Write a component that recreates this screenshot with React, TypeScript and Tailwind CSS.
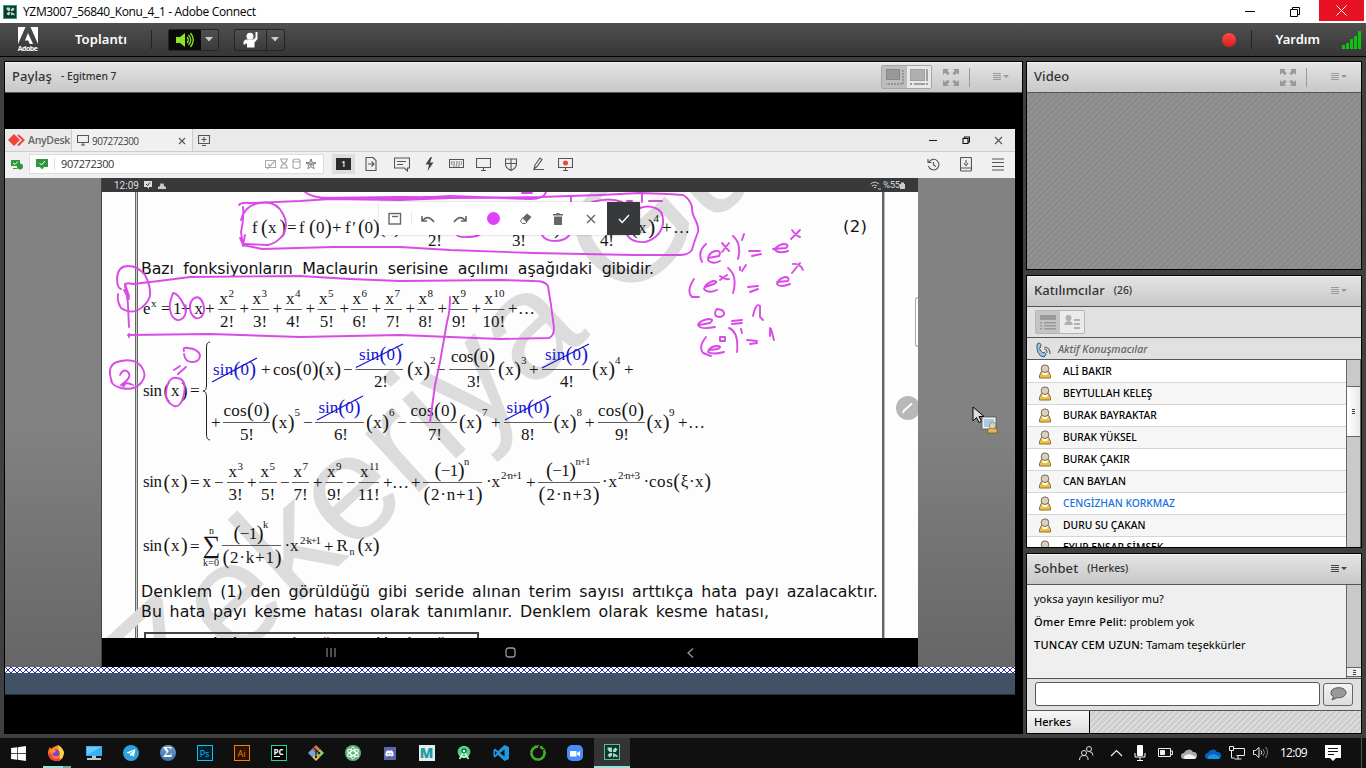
import React from "react";
import { FaWindows, FaTelegramPlane, FaDiscord } from "react-icons/fa";

type Tok = [string, number, number, number, number?, string?];

const BLUE = "#1414d2";

const X = (n: string, x: number, y: number, s = 16.5, w?: number, c?: string): Tok => [n, x, y, s, w, c];

const tokens: Tok[] = [
  // Maclaurin expansion
  X("f", 252, 233), X("(", 261, 234, 20), X("x", 268, 233, 17), X(")", 279.5, 234, 20), X("=", 287, 233, 17),
  X("f", 299, 233), X("(", 309, 234, 20), X("0", 316, 233, 17), X(")", 325, 234, 20), X("+", 332, 233, 17),
  X("f′", 345, 233, 17, 11), X("(", 358, 234, 20), X("0", 364.5, 233, 17), X(")", 373, 234, 20),
  X("(", 379, 233, 20), X(")", 394, 233, 20),
  X("2!", 428, 246, 17, 14), X("3!", 512, 246, 17, 14), X("4!", 600, 246, 17, 14),
  X(")", 554, 234, 20), X("(", 631, 234, 20), X("x", 638, 233, 17), X(")", 648, 234, 22), X("4", 653.5, 222, 11),
  X("+…", 662, 233, 17, 28),
  // exponential series
  X("e", 143, 313.5, 17), X("x", 151, 307, 11), X("=", 161, 314, 17), X("1", 173, 313.5, 17), X("+", 181, 314, 17), X("x", 194.5, 313.5, 17), X("+", 205, 314, 17),
  // piecewise body
  X("sin", 143, 395.5, 17, 19), X("(", 163.5, 397, 20), X("x", 171, 395.5, 17), X(")", 181, 397, 20), X("=", 190, 396, 17),
  X("sin(0)", 213, 374.5, 17, 43, BLUE), X("+", 261, 375, 17), X("cos(0)(x)", 273, 374.5, 17, 68), X("−", 343, 375, 17),
  X("sin(0)", 359, 360, 17, 43, BLUE), X("2!", 374, 386.5, 17, 14), X("(x)", 407, 374.5, 17, 23), X("2", 430, 363.5, 11), X("−", 436, 375, 17),
  X("cos(0)", 451, 362, 17, 44), X("3!", 467, 386.5, 17, 14), X("(x)", 498, 374.5, 17, 23), X("3", 521, 363.5, 11), X("+", 529, 375, 17),
  X("sin(0)", 545, 360, 17, 43, BLUE), X("4!", 560, 386.5, 17, 14), X("(x)", 592, 374.5, 17, 23), X("4", 615, 363.5, 11), X("+", 624, 375, 17),
  X("+", 211, 428, 17), X("cos(0)", 223.5, 415.5, 17, 46), X("5!", 240, 440, 17, 14), X("(x)", 271.5, 427.5, 17, 23), X("5", 294.5, 416, 11), X("−", 303, 428, 17),
  X("sin(0)", 318.5, 413, 17, 42, BLUE), X("6!", 334, 440, 17, 14), X("(x)", 366, 427.5, 17, 23), X("6", 389, 416, 11), X("−", 397, 428, 17),
  X("cos(0)", 410.5, 415.5, 17, 46), X("7!", 428, 440, 17, 14), X("(x)", 459, 427.5, 17, 23), X("7", 482, 416, 11), X("+", 491, 428, 17),
  X("sin(0)", 506.5, 413, 17, 43, BLUE), X("8!", 521, 440, 17, 14), X("(x)", 553.5, 427.5, 17, 23), X("8", 576.5, 416, 11), X("+", 585, 428, 17),
  X("cos(0)", 598, 415.5, 17, 46), X("9!", 615, 440, 17, 14), X("(x)", 646.5, 427.5, 17, 23), X("9", 669, 416, 11), X("+…", 678, 428, 17, 27),
  // sine series
  X("sin", 143, 487, 17, 19), X("(", 163.5, 488.5, 20), X("x", 171, 487, 17), X(")", 181, 488.5, 20), X("=", 190, 488, 17), X("x", 202.5, 487, 17), X("−", 214, 488, 17),
  X("+", 247, 488, 17), X("−", 280, 488, 17), X("+", 313, 488, 17), X("−", 346, 488, 17), X("+…", 383, 488, 17, 26), X("+", 411, 488, 17),
  X("(−1)", 434.5, 476, 17, 30), X("n", 464, 465, 10.5), X("(2·n+1)", 423.5, 500, 17, 59), X("·", 486, 487, 17), X("x", 491.5, 487, 17), X("2·n+1", 501, 479, 11, 21), X("+", 526, 488, 17),
  X("(−1)", 546, 476, 17, 30), X("n+1", 575.5, 465, 10.5, 15), X("(2·n+3)", 538.5, 500, 17, 61), X("·", 602, 487, 17), X("x", 608.5, 487, 17), X("2·n+3", 618, 479, 11, 22), X("·", 643.5, 487, 17), X("cos(ξ·x)", 649, 487, 17, 62),
  // sum form
  X("sin", 143, 550.5, 17, 19), X("(", 163.5, 552, 20), X("x", 171, 550.5, 17), X(")", 181, 552, 20), X("=", 190, 551.5, 17), X("∑", 202.5, 553, 25, 18), X("n", 209, 534, 10), X("k=0", 203, 565.5, 10, 16),
  X("(−1)", 233.5, 538.5, 17, 30), X("k", 263, 528, 10.5), X("(2·k+1)", 222.5, 563, 17, 59), X("·", 284.5, 550.5, 17), X("x", 290, 550.5, 17), X("2·k+1", 300, 543.5, 11, 21), X("+", 324, 551.5, 17), X("R", 336.5, 550.5, 17), X("n", 349.5, 555, 10), X("(x)", 357.5, 551, 17, 22),
];

const expTerms: [number, number, string][] = [
  [218, 236, "2"], [251, 269, "3"], [284.5, 302, "4"], [317.5, 336, "5"], [351, 368, "6"], [384, 402, "7"], [417, 434, "8"], [450, 468, "9"], [483, 504.5, "10"],
];
const sinTerms: [number, number, string][] = [
  [227, 244, "3"], [259, 277, "5"], [292, 309, "7"], [325.5, 343, "9"], [358.5, 379, "11"],
];
const bars: [number, number, number][] = [
  [355.5, 403, 369.5], [449, 495, 369.5], [542, 590, 369.5], [223, 270, 422.5], [315, 364, 422.5], [410, 457, 422.5], [504, 552, 422.5], [598, 645, 422.5],
  [423, 482, 482.5], [538, 600, 482.5], [222, 281, 545.5],
];
const strikes = ["M212 382L257 358", "M356 367.5L403 344", "M542 368L589 344", "M317 420L363 396", "M505 420L551 396"];

// Brackets inside an expression are set taller and slightly lower than its letters.
function MathText({ tok: [t, x, y, s, w, c] }: { tok: Tok }) {
  const parts = t.length > 1 ? t.split(/([()])/).filter(Boolean) : [t];
  const tall = (p?: string) => t.length > 1 && (p === "(" || p === ")");
  return (
    <text x={x} y={y} fontSize={s} fill={c} textLength={w} lengthAdjust="spacing">
      {parts.map((p, i) => (
        <tspan key={i} fontSize={tall(p) ? s + 3.5 : s} dy={(tall(p) ? 1.2 : 0) - (tall(parts[i - 1]) ? 1.2 : 0)}>{p}</tspan>
      ))}
    </text>
  );
}

function Terms({ list, y }: { list: [number, number, string][]; y: number }) {
  return (
    <>
      {list.map(([a, b, n]) => (
        <g key={n}>
          <text x={a + 1.5} y={y - 5.5} fontSize={17}>x</text>
          <text x={a + 10.5} y={y - 13} fontSize={11}>{n}</text>
          <path d={`M${a} ${y}H${b}`} stroke="#333" strokeWidth={0.8} />
          <text x={a + (b - a) / 2} y={y + 17} fontSize={17} textAnchor="middle">{n}!</text>
        </g>
      ))}
    </>
  );
}

function Formulas() {
  return (
    <svg className="absolute inset-0" width="816" height="446" viewBox="102 192 816 446" fontFamily="'Liberation Serif', serif" fill="#151515">
      <text transform="translate(164 726) rotate(-42.5)" fontFamily="'Liberation Sans', sans-serif" fontSize="151" fill="#dcdcdc">Zekeriya Gül</text>
      {tokens.map((tok, i) => <MathText key={i} tok={tok} />)}
      <Terms list={expTerms} y={309.5} />
      {expTerms.map(([, b, n]) => <text key={n} x={b + 3.5} y={314} fontSize={17} textLength={n === "10" ? 27 : undefined}>{n === "10" ? "+…" : "+"}</text>)}
      <Terms list={sinTerms} y={482.5} />
      <path d={bars.map(([a, b, y]) => `M${a} ${y}H${b}`).join("")} stroke="#333" strokeWidth={0.8} />
      <path d="M210 342Q206.5 342 206.5 347V385Q206.5 391 203 391Q206.5 391 206.5 397V434Q206.5 440 210 440" fill="none" stroke="#222" strokeWidth={1} />
      <path d={strikes.join("")} stroke={BLUE} strokeWidth={1.2} />
    </svg>
  );
}

function Ink() {
  return (
    <svg className="absolute inset-0" width="816" height="446" viewBox="102 192 816 446" fill="none" stroke="#d94be6" strokeWidth="1.9" strokeLinecap="round" strokeLinejoin="round">
      <path d="M305 192Q312 198 330 198L400 199 450 196 530 199Q544 199 546 192M320 198L400 197 520 198M522 193h10" />
      <path d="M239 205Q241 202 250 203L300 201 330 199 400 200 450 198 540 197 600 195 640 193 668 194 683 195Q690 199 692 207 692 214 695 219 699 227 698 232 693 245 692 250 688 255 680 255L633 255 533 253 450 250 400 247 333 247 262 249 243 245" />
      <path d="M243 207Q244 220 241 232L243 246M241 220Q245 205 260 203 276 200 283 214 289 224 283 235 277 243 268 245L245 244M240 238l3 7 2-10" />
      <path d="M455 233Q457 238 468 237 478 237 482 233M542 235Q545 241 555 241 566 241 570 234M627 235Q632 243 645 242 660 238 663 224 664 210 655 208 648 205 640 208M571 197V202M592 202Q610 197 622 202M627 201h5M642 194V202M649 201h13" />
      <path d="M125 285Q126 282 133 284Q160 281 190 277L300 276 350 279 400 281 500 280 535 281Q545 281 548 286L551 305 554 328Q554 336 549 338L500 339 400 335 300 337 210 334 128 335M129 337v-3M125 286Q128 300 128 306L129 327" />
      <path d="M121 289Q117 288 117 278 118 266 128 266 138 266 145 275 151 286 150 296 147 305 138 310 130 314 121 308 117 302 118 294M126 287L129 299M124 290l5 9M125 284l4 12" />
      <path d="M173 293Q178 293 184 305 188 313 183 318 177 323 172 316 168 308 171 299ZM193 299Q199 294 203 303 206 312 201 317 195 321 191 313 188 304 193 299Z" />
      <path d="M450 297Q450 312 447 322L440 362 435 385 430 422" />
      <path d="M112 382Q106 366 117 362 133 357 141 366 148 375 141 383 134 391 121 388 113 386 111 381M120 375Q123 368 128 372 133 377 121 385L124 386Q125 381 133 385" />
      <path d="M184 351Q182 347 188 348 198 349 200 355 200 362 192 362 185 362 184 354M174 370L180 366M178 374L186 367" />
      <path d="M177 378Q187 379 184 394 181 408 174 406 165 402 166 392 168 376 177 378Z" />
      <path d="M706 244Q697 252 702 262M708 258L719 256Q722 250 715 251 708 253 708 260 712 265 720 261M722 243L729 251M729 243L722 252M733 236Q742 244 738 259M744 234L742 240M749 251H760M752 256L761 254" />
      <path d="M773 249L786 248Q790 244 783 244 776 246 775 250 779 254 788 251M792 230Q796 236 800 237M800 230L791 239" />
      <path d="M694 279Q686 291 692 297L699 297M705 287L714 284Q719 281 713 281 705 284 704 289 708 294 717 290M720 276Q725 280 729 279M727 275L720 280M728 268Q738 276 733 293M740 267v3M746 265L742 271M748 287L758 286M750 292L758 289" />
      <path d="M777 282L788 281Q790 277 785 277 778 279 777 284 780 288 790 284M793 264Q800 263 803 270M800 263L792 273" />
      <path d="M699 325L710 323Q715 319 708 319 699 321 698 325 700 330 715 327M716 310Q713 317 720 317 727 315 722 310L717 309M732 321L742 320M732 324L742 323M753 316Q756 302 760 306L760 317 763 320" />
      <path d="M706 337Q698 347 703 353L711 356M709 350L718 349Q723 346 716 346 709 347 708 352 713 355 724 352M720 337V341H725V337ZM729 328Q739 332 737 352M741 329L742 333M747 340L757 341M750 344L757 343M770 328V336M771 329L774 340" />
    </svg>
  );
}

const Check = () => (
  <svg width="14" height="14" viewBox="0 0 14 14" fill="none" stroke="#fff" strokeWidth="1.4"><path d="M2 7l3.2 3.5L12 3" /></svg>
);

function InkToolbar() {
  const cell = "flex w-[32.6px] h-full items-center justify-center";
  const s = { fill: "none", stroke: "#666", strokeWidth: 1.4 } as const;
  return (
    <div className="absolute left-[277px] top-[10px] flex h-[33px] w-[261px] items-center bg-white shadow-[0_0_2px_rgba(0,0,0,0.25)]">
      <div className={`${cell} relative`}><svg width="14" height="14" {...s}><rect x="1" y="1.500" width="11.500" height="10.500" /><path d="M4 4.500h6" /></svg><span className="absolute right-0 top-[10px] h-[13px] w-px bg-[#e8e8e8]" /></div>
      <div className={cell}><svg width="16" height="16" {...s} strokeWidth="1.600"><path d="M2 5v5h5M2.500 9.500Q8 3 14 11" /></svg></div>
      <div className={cell}><svg width="16" height="16" {...s} strokeWidth="1.600"><path d="M14 5v5H9M13.500 9.500Q8 3 2 11" /></svg></div>
      <div className={cell}><span className="size-[13px] rounded-full bg-[#e040fb]" /></div>
      <div className={cell}><svg width="14" height="14" fill="#666"><path d="M8 1.500L12.500 5 8 10 3.500 6z" /><path d="M3.500 6L8 10 6.500 11.500H3.500L1.500 9z" fill="white" stroke="#666" /></svg></div>
      <div className={cell}><svg width="12" height="14" fill="#666"><path d="M1 2h3l1-1h2l1 1h3v1.500H1zM2 4.500h8V13H2z" /></svg></div>
      <div className={cell}><svg width="12" height="12" {...s}><path d="M2 2l8 8M10 2l-8 8" /></svg></div>
      <div className="flex h-full flex-1 items-center justify-center bg-[#37393b]"><Check /></div>
    </div>
  );
}

function Page() {
  return (
    <div className="relative h-[446px] w-[816px] overflow-hidden bg-[#fdfdfd]">
      <div className="absolute bottom-0 left-[33px] top-0 w-[3px] border-x border-[#666] bg-[#ccc]" />
      <div className="absolute bottom-0 right-[33px] top-0 w-[3px] border-l-2 border-r border-l-[#666] border-r-[#bbb]" />
      <Formulas />
      <div className="relative flex flex-col pl-[39px] font-['DejaVu_Sans',sans-serif] text-[15.8px] leading-[20px] text-[#111]">
        <p className="mt-[25px] pl-[702px] text-[16.5px] tracking-[0.3px]">(2)</p>
        <p className="mt-[22px] w-[513px] whitespace-nowrap tracking-[-0.12px] [text-align-last:justify]">Bazı fonksiyonların Maclaurin serisine açılımı aşağıdaki gibidir.</p>
        <p className="mt-[303px] w-[737px] whitespace-nowrap tracking-[0.12px] [text-align-last:justify]">Denklem (1) den görüldüğü gibi seride alınan terim sayısı arttıkça hata payı azalacaktır.</p>
        <p className="w-[628px] whitespace-nowrap tracking-[0.08px] [text-align-last:justify]">Bu hata payı kesme hatası olarak tanımlanır. Denklem olarak kesme hatası,</p>
        <div className="ml-[3px] mt-[10px] flex h-[24px] w-[335px] gap-4 border-2 border-[#444] pl-1 pt-[1px] font-['Liberation_Sans',sans-serif] text-[14px] font-bold leading-[16px]">
          <span>Hata Yüzdesi</span><span className="text-[#c0143c]">Gerçek Değer</span><span className="text-[#1414a0]">Yaklaşık Değer</span>
        </div>
      </div>
      <Ink />
      <InkToolbar />
      <div className="absolute right-0 top-[105px] h-[50px] w-[3px] rounded-l-sm border border-r-0 border-[#aaa]" />
      <div className="absolute left-[794px] top-[204px] flex size-6 items-center justify-center rounded-full bg-[#b8b8b8]">
        <svg width="14" height="14" stroke="#fff" strokeWidth="2"><path d="M2 12l1-2.500L11 2.500" fill="none" /></svg>
      </div>
    </div>
  );
}

function Burger({ dark }: { dark?: boolean }) {
  return (
    <svg width="16" height="8" fill={dark ? "#444" : "#999"}><path d="M0 0h8v1H0zM0 2h8v1H0zM0 4h8v1H0zM0 6h8v1H0zM10 2h6l-3 3z" /></svg>
  );
}

function Expand() {
  return (
    <svg width="16" height="17" viewBox="0 0 16 17" fill="#999">
      <path d="M0 0h6L4.300 1.700 6.800 4.200 4.700 6.300 2.200 3.800 0 6zM16 0v6l-2-2-2.500 2.300-2.200-2.100L11.800 1.700 10 0zM0 17v-6l2 2 2.500-2.300 2.200 2.100-2.500 2.500L6 17zM16 17h-6l1.800-1.700-2.500-2.500 2.200-2.100L14 13l2-2z" />
    </svg>
  );
}

function Header({ title, sub, children }: { title: string; sub?: string; children?: React.ReactNode }) {
  return (
    <div className="flex h-[31px] shrink-0 items-center border-b border-[#555] bg-linear-to-b from-[#e4e4e4] to-[#c8c8c8] pl-[7px] text-[#333] shadow-[inset_0_1px_0_#f4f4f4]">
      <span className="text-[13px] font-medium tracking-[0.08px]">{title}</span>
      <span className="ml-[9px] text-[10.3px] font-medium">{sub}</span>
      <div className="ml-auto flex h-full items-center">{children}</div>
    </div>
  );
}

const Sep = () => <span className="ml-[10px] h-[19px] w-px bg-[#999]" />;

function TopBars() {
  const btn = "flex h-[22px] items-center rounded-[2px] border border-[#252525] bg-linear-to-b from-[#505050] to-[#3a3a3a]";
  const arrow = <svg width="8" height="5" fill="#ccc"><path d="M0 0h8L4 4.500z" /></svg>;
  return (
    <>
      <div className="flex h-[23px] shrink-0 items-center bg-white pl-[3px] text-black">
        <div className="flex size-[14px] items-center justify-center border border-[#2aa07a] bg-[#12372e]"><ConnectMark size={9} /></div>
        <span className="ml-[6px] font-['Open_Sans',sans-serif] text-[12px] tracking-[-0.35px]">YZM3007_56840_Konu_4_1 - Adobe Connect</span>
        <svg className="ml-auto" width="56" height="12" fill="none" stroke="#000"><path d="M0 5.500h10M45.500 3.500h7v7h-7zM47.500 3.500v-2h7v7h-2" /></svg>
        <div className="ml-[18px] mr-[2px] flex h-[21px] w-[45px] items-center justify-center self-start bg-[#e81123]">
          <svg width="11" height="11" stroke="#fff"><path d="M.500.500l10 10M10.500.500l-10 10" /></svg>
        </div>
      </div>
      <div className="flex h-[34px] shrink-0 items-center border-b border-black bg-linear-to-b from-[#505050] to-[#363636] text-white">
        <div className="ml-[16px] flex w-[23px] flex-col items-center">
          <svg width="20" height="17" fill="#fff"><path d="M0 0h7.500L0 17zM20 0h-7.500L20 17zM10 6l5 11h-3.300L10.200 13.500H7z" /></svg>
          <span className="font-['Open_Sans',sans-serif] text-[7px] font-bold leading-[9px] tracking-[-0.5px]">Adobe</span>
        </div>
        <span className="ml-[36px] text-[13px] font-semibold tracking-[0.1px]">Toplantı</span>
        <span className="ml-[24px] h-[19px] w-px bg-[#222]" />
        <div className={`${btn} ml-[16px] w-[51px]`}>
          <div className="flex h-full w-[32px] items-center justify-center bg-[#0a0a0a]">
            <svg width="18" height="16" fill="#8ce428"><path d="M0 5h4l5-4v14l-5-4H0z" /><path d="M11 5q2.500 3 0 6M12.500 3q4.500 5 0 10M14.500 1q5.500 7 0 14" fill="none" stroke="#8ce428" strokeWidth="1.300" /></svg>
          </div>
          <div className="flex flex-1 justify-center">{arrow}</div>
        </div>
        <div className={`${btn} ml-[15px] w-[51px]`}>
          <div className="flex h-full w-[32px] items-center justify-center border-r border-[#252525]">
            <svg width="15" height="16" fill="#fff"><circle cx="7" cy="4.300" r="3.500" /><path d="M.500 12.500V9.500l2-2h7.500l2.500-2V0h2v7l-3 3.500V15.500h-7.500V11.500l-1.500 0v1z" /></svg>
          </div>
          <div className="flex flex-1 justify-center">{arrow}</div>
        </div>
        <span className="ml-auto size-[14px] rounded-full bg-linear-to-b from-[#ff4a40] to-[#d41c1c]" />
        <span className="ml-[15px] h-[19px] w-px bg-[#222]" />
        <span className="ml-[24px] text-[13px] font-semibold">Yardım</span>
        <svg className="ml-[22px] mr-[5px]" width="19" height="18" fill="#0bc40b"><path d="M0 14h3v4H0zM4 12h3v6H4zM8 8h3v10H8zM12 5h3v13h-3zM16 0h3v18h-3z" /></svg>
      </div>
    </>
  );
}

function ConnectMark({ size }: { size: number }) {
  return (
    <svg width={size} height={size} viewBox="0 0 10 10" fill="#a5e0ca"><path d="M.500.500H4.500V4.500H2.500L.500 2.500zM5.500 4.500V2.500L7.500.500 9.500 2 8 4.500zM4.500 5.500V8L2.500 9.500.500 7.500 2.500 5.500zM5.500 5.500L9.500 7.500V9.500L7.500 8.500 5.500 9.500z" /></svg>
  );
}

function AnyDesk() {
  const i = { fill: "none", stroke: "#555", strokeWidth: 1.1 } as const;
  const c = "flex w-[27.3px] items-center justify-center";
  return (
    <div className="mt-[36px] flex h-[566px] w-[1010px] flex-col font-['Open_Sans',sans-serif]">
      <div className="flex h-[23px] items-stretch border-b border-[#ccc] bg-[#eaeaea] text-[#444]">
        <div className="flex w-[67px] items-center border-r border-[#ccc] pl-[2px]">
          <svg width="18" height="14" viewBox="0 0 18 14"><path d="M1 7l6-6 6 6-6 6z" fill="#ef443b" /><path d="M11 2l5.500 5L11 12.500" fill="none" stroke="#ef443b" strokeWidth="2" /></svg>
          <span className="ml-[3px] mt-[2px] text-[10.5px] font-semibold tracking-[-0.3px] text-[#666]">AnyDesk</span>
        </div>
        <div className="flex w-[121px] items-center border-r border-[#ccc] bg-[#f0f0f0] pl-[5px]">
          <svg width="12" height="11" {...i}><path d="M.500.500h11v7H.500zM4 10h4M6 7.500V10" /></svg>
          <span className="ml-[3px] mt-[2px] text-[10px] tracking-[-0.55px]">907272300</span>
          <svg className="ml-auto mr-[6px] mt-[2px]" width="8" height="8" {...i}><path d="M1 1l6 6M7 1L1 7" /></svg>
        </div>
        <svg className="ml-[5px] mt-[6px]" width="12" height="11" {...i}><path d="M.500.500h11v8H.500zM4 10.500h4M6 2v5M3.500 4.500h5" /></svg>
        <div className="ml-auto mr-[12px] flex items-center gap-[24px]">
          <svg width="9" height="9" {...i} stroke="#222"><path d="M0 4.500h8" /></svg>
          <svg width="8" height="8" {...i} stroke="#111"><path d="M1 2.500h5v5H1zM2.500 2V1h5v5h-1" /></svg>
          <svg width="9" height="9" {...i}><path d="M1 1l7 7M8 1L1 8" /></svg>
        </div>
      </div>
      <div className="flex h-[26px] items-center bg-[#f0f0f0] pb-[2px]">
        <svg className="ml-[6px]" width="12" height="11" fill="#2f9640"><path d="M0 1h9v6H0zM2 9h4v1H2z" /><path d="M2 4l2 1.500L7 2.500" stroke="#fff" fill="none" /><circle cx="9" cy="7.500" r="3" /></svg>
        <div className="ml-[6px] flex h-[20px] w-[295px] items-center border border-[#ddd] bg-white pl-[6px]">
          <svg width="12" height="12" fill="#2f9640"><path d="M0 1h12v8H0zM4 9h4l-2 2.500z" /><path d="M3.500 5l2 2 3.500-4" stroke="#fff" fill="none" /></svg>
          <span className="ml-[6px] h-3 w-px bg-[#ddd]" />
          <span className="ml-[6px] mt-px text-[11px] tracking-[-0.4px] text-[#333]">907272300</span>
          <div className="ml-auto mr-[6px] flex items-center gap-[4px]">
            <svg width="11" height="11" {...i} stroke="#aaa"><path d="M.500 1.500h10v7H.500zM2 10l8-8M3 5l2 2" /></svg>
            <svg width="8" height="12" {...i} stroke="#aaa"><path d="M0 1h8M0 10h8M1 1q0 3 3 4.500 3-1.500 3-4.500M1 10q0-3 3-4.500 3 1.500 3 4.500" /></svg>
            <svg width="9" height="12" {...i} stroke="#aaa"><ellipse cx="4.500" cy="2.500" rx="3.500" ry="1.500" /><path d="M1 2.500v7q3.500 2 7 0v-7" /></svg>
            <svg width="12" height="12" {...i} stroke="#777"><path d="M6 1l1.400 3.400 3.600.3-2.700 2.400.8 3.600L6 8.800l-3.100 1.900.8-3.600L1 4.700l3.600-.3zM6 1v7.800M1 4.700l7.300 2.400M11 4.700L3.700 7.100" strokeWidth=".9" /></svg>
          </div>
        </div>
        <div className="ml-[8px] flex h-[20px] w-[23px] items-center justify-center bg-[#ddd]">
          <span className="flex h-[12px] w-[15px] items-center justify-center bg-[#2b2b2b] text-[8px] font-semibold text-white">1</span>
        </div>
        <div className={`${c} ml-[2px]`}><svg width="12" height="14" {...i}><path d="M1 .500h7l3 3v10H1zM3 7h6M6.500 4.500L9 7 6.500 9.500" /></svg></div>
        <div className={`${c} ml-[4px]`}><svg width="16" height="15" {...i}><path d="M.500 1h15v10h-2v3l-3-3H.500zM3 4.500h9M3 7.500h6" /></svg></div>
        <div className={c}><svg width="9" height="14" fill="#444"><path d="M5.500 0L.500 7.500h3.500L2.500 14 8.500 5.500H5L7 0z" /></svg></div>
        <div className={c}><svg width="15" height="10" {...i}><path d="M.500.500h14v8H.500z" /><path d="M2 3h11M2 5h11M4 7h7" strokeDasharray="1.500 1" /></svg></div>
        <div className={c}><svg width="15" height="13" {...i}><path d="M.500.500h14v9H.500zM5 12.500h5M7.500 9.500v3" /></svg></div>
        <div className={c}><svg width="12" height="13" {...i}><path d="M.500 1h11v5q0 4-5.500 6.500Q.500 10 .500 6zM6 1v11M.500 5.500h11" /></svg></div>
        <div className={c}><svg width="12" height="14" {...i}><path d="M3 8L8 1l2 1.500L5 9.500 2 12zM2 12.500h10" /></svg></div>
        <div className={c}><svg width="15" height="13" {...i}><path d="M.500.500h14v9H.500zM5 12.500h5M7.500 9.500v3" /><circle cx="7.500" cy="5" r="2.500" fill="#ef443b" stroke="none" /></svg></div>
        <div className="ml-auto mr-[11px] flex items-center gap-[20px]">
          <svg width="13" height="13" {...i}><path d="M2 4a5.300 5.300 0 1 1-.500 4M1 1v3.500h3.500M6.500 4v3l2.500 1.500" /></svg>
          <svg width="12" height="15" {...i}><rect x=".5" y=".5" width="11" height="13.500" rx="1" /><path d="M1 11h10M6 3v3M4 6l2 2.500L8 6" /></svg>
          <svg width="12" height="13" {...i}><path d="M0 1h12M0 4.500h12M0 8.500h12M0 12h12" /></svg>
        </div>
      </div>
      <div className="flex h-[489px] bg-linear-to-b from-[#828282] from-50% to-[#666]">
        <div className="ml-[96px] flex w-[817px] flex-col border-l border-[#444] bg-black">
          <div className="flex h-[14px] items-center bg-[#37393b] pl-[12px] font-['Roboto',sans-serif] text-[10px] text-[#ddd]">
            <span>12:09</span>
            <svg className="ml-[5px]" width="8" height="8" fill="#ddd"><path d="M0 0h8v6H5v2L3 6H0z" /><path d="M2 3l1.500 1.500L6 1.500" stroke="#37393b" fill="none" /></svg>
            <svg className="ml-[6px]" width="8" height="7" fill="#ccc"><path d="M0 7V5l2-1 .5-3 1.500 1 1.500-1 .5 3 2 1v2z" /></svg>
            <svg className="ml-auto" width="11" height="9" fill="none" stroke="#ccc"><path d="M.500 3Q4.500-.500 9 3M2 5q2.500-2 5 0M4 6.500h2M8 8h3" /></svg>
            <span className="ml-[2px] text-[9.500px] tracking-[-0.2px]">%55</span>
            <svg className="mr-[13px]" width="5" height="7" fill="#ccc"><path d="M0 2h1V.500h3V2h1v5H0z" /></svg>
          </div>
          <Page />
          <div className="flex h-[29px] items-center">
            <svg className="ml-[224px]" width="11" height="11" stroke="#999"><path d="M1 1v9M5 1v9M9 1v9" /></svg>
            <svg className="ml-[168px]" width="11" height="11" fill="none" stroke="#999" strokeWidth="1.300"><rect x="1" y="1" width="9" height="9" rx="2.500" /></svg>
            <svg className="ml-[171px]" width="7" height="10" fill="none" stroke="#999" strokeWidth="1.300"><path d="M6 .500L1 5l5 4.500" /></svg>
          </div>
        </div>
      </div>
      <svg width="1010" height="6" className="block">
        <defs><pattern id="hatch" width="6" height="6" patternUnits="userSpaceOnUse"><rect width="6" height="6" fill="#fff" /><path d="M0 0l6 6M6 0L0 6" stroke="#2a2ab4" strokeWidth="1" /></pattern></defs>
        <rect width="1010" height="6" fill="url(#hatch)" />
      </svg>
      <div className="flex-1 border-b border-[#24303a] bg-[#405263]" />
    </div>
  );
}

function SharePod() {
  return (
    <div className="relative flex w-[1019px] flex-col border border-b-0 border-black bg-black">
      <Header title="Paylaş" sub="- Egitmen 7">
        <div className="flex h-[24px] overflow-hidden rounded-[2px] border border-[#a5a5a5]">
          <div className="flex w-[25px] items-center justify-center bg-[#bdbdbd]"><svg width="18" height="16"><rect x=".5" y=".5" width="13" height="10" fill="#999" stroke="#888" /><path d="M17 1v14H0" fill="none" stroke="#888" strokeDasharray="2 1" strokeWidth="1.500" /></svg></div>
          <div className="flex w-[24px] items-center justify-center bg-[#e8e8e8]"><svg width="18" height="16" fill="#b0b0b0" stroke="#a0a0a0"><rect x=".5" y=".5" width="14" height="11" /><path d="M17 0v12M17 14v2M0 15h2M4 15h11" strokeWidth="2" fill="none" /></svg></div>
        </div>
        <span className="w-[11px]" /><Expand /><Sep /><span className="w-[23px]" /><Burger /><span className="w-[13px]" />
      </Header>
      <AnyDesk />
      <svg className="absolute left-[967px] top-[344px]" width="28" height="30" viewBox="0 0 28 30">
        <path d="M2 1v14l3.500-3.500L8 16.500l2.500-1.200L8 10.500h5z" fill="#ddd" stroke="#000" transform="translate(-1 0)" />
        <rect x="11" y="12" width="12" height="10" fill="#a8cbe0" stroke="#eee" strokeWidth="2" /><rect x="10" y="11" width="14" height="12" fill="none" stroke="#444" strokeWidth=".7" />
        <path d="M15.500 27q0-5 2.500-5h5q2.500 0 2.500 5z" fill="#e3b34f" stroke="#7a5a20" strokeWidth=".8" /><circle cx="20.500" cy="19.500" r="3.200" fill="#ddd2bd" stroke="#777" strokeWidth=".7" />
      </svg>
    </div>
  );
}

function Person() {
  return (
    <svg width="12" height="15" viewBox="0 0 12 15">
      <path d="M.5 14V11.500L2.300 7.500H9.700L11.500 11.500V14z" fill="#ecc04c" stroke="#94702a" />
      <path d="M3 8h6l-1 3H4z" fill="#fff" />
      <circle cx="6" cy="4.700" r="3.800" fill="#ddcfb8" stroke="#6f6a62" />
    </svg>
  );
}

const people = ["ALİ BAKIR", "BEYTULLAH KELEŞ", "BURAK BAYRAKTAR", "BURAK YÜKSEL", "BURAK ÇAKIR", "CAN BAYLAN", "CENGİZHAN KORKMAZ", "DURU SU ÇAKAN", "EYUP ENSAR ŞİMŞEK"];

const Grip = () => <svg width="3" height="5" fill="#444"><path d="M0 0h3v1H0zM0 2h3v1H0zM0 4h3v1H0z" /></svg>;

function RightColumn() {
  return (
    <div className="ml-[3px] flex w-[336px] flex-col gap-[5px] text-black">
      <div className="flex h-[209px] flex-col border border-black">
        <Header title="Video"><Expand /><Sep /><span className="w-[24px]" /><Burger /><span className="w-[14px]" /></Header>
        <div className="flex-1 bg-[repeating-linear-gradient(135deg,#8b8b8b_0px,#8b8b8b_3px,#9d9d9d_3.6px,#8b8b8b_4.24px)]" />
      </div>
      <div className="flex h-[273px] flex-col border border-black">
        <Header title="Katılımcılar" sub="(26)"><Burger /><span className="w-[14px]" /></Header>
        <div className="flex h-[31px] shrink-0 items-center border-b border-[#555] bg-[#e1e1e1] pl-[8px]">
          <div className="flex h-[24px] w-[50px] overflow-hidden rounded-[2px] border border-[#b5b5b5]">
            <div className="flex w-[24px] items-center justify-center bg-[#c4c4c4]"><svg width="16" height="15" fill="#999"><path d="M0 0h16v5H0zM0 7h2v1.500H0zM4 7h12v1.500H4zM0 10h2v1.500H0zM4 10h12v1.500H4zM0 13h2v1.500H0zM4 13h12v1.500H4z" /></svg></div>
            <div className="flex flex-1 items-center justify-center bg-[#ebebeb]"><svg width="16" height="14" fill="#b0b0b0"><circle cx="4.500" cy="3" r="3" /><path d="M0 10l1.500-3L4 6h1l2.500 1L9 10zM10 4h6v2h-6zM10 8h6v2h-6zM10 12h6v2h-6z" /></svg></div>
          </div>
        </div>
        <div className="flex h-[22px] shrink-0 items-center border-b border-[#555] bg-[#e1e1e1] pl-[9px] pt-[2px]">
          <svg width="15" height="16" viewBox="0 0 15 16"><path d="M1 3Q1 1 3.500 1L5 2.500 4.500 5 3.500 6.500Q4.500 9.500 6.500 10.500L8.500 10.500 10 12.500 8 15Q4 15 2 10.500 .500 6 1 3z" fill="#9cc3de" stroke="#3a586e" /><path d="M8 7q3 0 3 4M8 5q6 0 6 7" fill="none" stroke="#666" strokeWidth="1.200" /></svg>
          <span className="ml-[7px] text-[10.500px] font-medium italic text-[#666]">Aktif Konuşmacılar</span>
        </div>
        <div className="flex min-h-0 flex-1">
          <div className="flex-1 overflow-hidden bg-white pt-px">
            {people.map((p, n) => (
              <div key={p} className={`flex h-[22px] items-center border-b border-[#d5d5d5] pl-[12px] ${n % 2 ? "bg-[#f6f6f6]" : "bg-white"}`}>
                <Person />
                <span className={`ml-[12px] text-[10.300px] font-medium ${n === 6 ? "text-[#1672e0]" : ""}`}>{p}</span>
              </div>
            ))}
          </div>
          <div className="w-[15px] border-l border-r border-[#666] bg-[#c9c9c9] pt-[26px]">
            <div className="flex h-[51px] items-center justify-center border-y border-[#666] bg-linear-to-r from-white to-[#e8e8e8]"><Grip /></div>
          </div>
        </div>
      </div>
      <div className="flex h-[181px] flex-col border border-black">
        <Header title="Sohbet" sub="(Herkes)"><Burger dark /><span className="w-[14px]" /></Header>
        <div className="flex h-[94px] shrink-0 border-b border-[#555] bg-[#efefef] text-[11px]">
          <div className="flex-1 pl-[7px] pt-[2px] leading-[23px]">
            <p>yoksa yayın kesiliyor mu?</p>
            <p><b className="font-medium tracking-[0.22px]">Ömer Emre Pelit:</b> problem yok</p>
            <p><b className="font-medium tracking-[0.22px]">TUNCAY CEM UZUN:</b> Tamam teşekkürler</p>
          </div>
          <div className="w-[15px] border-l border-[#666] bg-[#c9c9c9] pt-[82px]">
            <div className="flex h-[10px] items-center justify-center border-y border-[#666] bg-[#eee]"><Grip /></div>
          </div>
        </div>
        <div className="flex h-[32px] shrink-0 items-center gap-[3px] border-b border-[#555] bg-[#e0e0e0] pb-px pl-[8px]">
          <div className="h-[24px] w-[285px] rounded-[3px] border border-[#555] bg-white" />
          <div className="flex h-[23px] w-[30px] items-center justify-center rounded-[3px] border border-[#666] bg-linear-to-b from-[#f4f4f4] to-[#ddd]">
            <svg width="17" height="14" fill="#999" stroke="#555"><path d="M9 .7C4 .7 1 3 1 5.700c0 2 1 3 2.500 4L2 13l5-2.300c5 .5 9-2 9-5C16 3 13 .7 9 .7z" /></svg>
          </div>
        </div>
        <div className="flex flex-1 bg-[repeating-linear-gradient(135deg,#cfcfcf_0px,#cfcfcf_2.9px,#efefef_3.6px,#cfcfcf_4.24px)]">
          <div className="flex w-[63px] items-center border-r border-black bg-linear-to-b from-[#f8f8f8] to-[#dedede] pl-[7px] text-[11px] font-medium">Herkes</div>
        </div>
      </div>
    </div>
  );
}

function Taskbar() {
  const cell = "flex h-full w-[37px] items-center justify-center";
  const sq = "flex size-[16px] items-center justify-center border font-['Open_Sans',sans-serif] text-[9px] leading-none";
  return (
    <div className="flex h-[30px] items-center bg-[#101010] text-white">
      <div className={cell}><FaWindows size={17} /></div>
      <div className={`${cell} relative`}>
        <svg width="18" height="18" viewBox="0 0 18 18"><path d="M9 2Q11 0 12 3q4 1 4.500 6Q16 17 9 17 1.500 16 1 9 1 6 3 3l1 2q2-2 5-3z" fill="#ff8a1e" /><path d="M11 1q4 2 6 7 0 7-6 9 4-5 1-9z" fill="#ffd43b" /><path d="M2 8Q1 15 9 17q4 0 5-3-8 3-9-3z" fill="#f8324f" /><circle cx="9" cy="9" r="3.500" fill="#7846d6" /><path d="M4 6q3-1 5 1l-2 2-3-1z" fill="#ff9a1e" /></svg>
        <span className="absolute bottom-0 left-[6px] h-[2px] w-[28px] border-r-8 border-[#6aa9a0] bg-[#8de8dc]" />
      </div>
      <div className={`${cell} ml-px`}><svg width="16" height="16"><path d="M0 1h16v10H0z" fill="#38b0f4" /><path d="M1 2h14L1 10z" fill="#6cc9fb" /><path d="M6 11h4v2H6zM1 13h14v2H1z" fill="#b9c6ce" /></svg></div>
      <div className={cell}><span className="flex size-4 items-center justify-center rounded-full bg-[#2aa2dd]"><FaTelegramPlane size={10} /></span></div>
      <div className={cell}><span className="flex size-4 items-center justify-center rounded-full bg-linear-to-b from-[#6f9fcd] to-[#3f71a9] font-['Liberation_Serif',serif] text-[14px] font-bold leading-none">Σ</span></div>
      <div className={cell}><span className={`${sq} border-[#00c8ff] bg-[#001e2c] text-[#00c8ff]`}>Ps</span></div>
      <div className={cell}><span className={`${sq} border-[#ff7c00] bg-[#261300] text-[#ff7c00]`}>Ai</span></div>
      <div className={cell}><span className="flex size-[16px] flex-col border border-[#21d789] bg-black pl-[2px] pt-px font-['Open_Sans',sans-serif] text-[8px] font-bold leading-[9px]">PC<i className="h-px w-[6px] bg-white" /></span></div>
      <div className={cell}><svg width="16" height="16" viewBox="0 0 16 16"><path d="M8 0l4 4-4 4-4-4z" fill="#e8705c" /><path d="M4 4l4 4-4 4-4-4z" fill="#6fa6ea" /><path d="M12 4l4 4-4 4-4-4z" fill="#8fd06a" /><path d="M8 8l4 4-4 4-4-4z" fill="#e8cb62" /><path d="M6 3l5 5M8 5v7" stroke="#222" strokeWidth="1.200" /><circle cx="8" cy="12" r="1.300" fill="#222" /><circle cx="11" cy="8" r="1.300" fill="#222" /></svg></div>
      <div className={cell}><svg width="16" height="16" viewBox="0 0 16 16" fill="none" stroke="#fff"><circle cx="8" cy="8" r="8" fill="#5fb57d" stroke="none" /><ellipse cx="8" cy="8" rx="2.300" ry="6" /><ellipse cx="8" cy="8" rx="2.300" ry="6" transform="rotate(60 8 8)" /><ellipse cx="8" cy="8" rx="2.300" ry="6" transform="rotate(120 8 8)" /></svg></div>
      <div className={cell}><span className="flex h-[13px] w-[12px] items-center justify-center bg-[#5b67ac]"><FaDiscord size={9} /></span></div>
      <div className={cell}><span className="flex size-[16px] items-center justify-center bg-[#e3eef0] font-['Open_Sans',sans-serif] text-[14px] font-extrabold leading-none text-[#1f9aa6]">M</span></div>
      <div className={cell}><svg width="14" height="16"><circle cx="7" cy="7" r="6.300" fill="#3ddc84" /><circle cx="7" cy="6" r="2.500" fill="#222" /><circle cx="7" cy="6" r="1.500" fill="#fff" /><path d="M6 8L2.500 14M8 8l3.500 6M4 11q3 2 6 0" stroke="#dfe9ee" strokeWidth="1.500" fill="none" /></svg></div>
      <div className={cell}><svg width="16" height="16"><path d="M11.500 0L16 2v12l-4.500 2L5 10 2 12.500.500 11.500V5L2 3.500 5 6z" fill="#2196e3" /><path d="M11.500 4.500V11.500L7 8zM2 6v4l2-2z" fill="#101010" /></svg></div>
      <div className={cell}><svg width="16" height="16" fill="none" stroke="#43b02a"><circle cx="8" cy="8" r="6.500" strokeWidth="2.400" strokeDasharray="30 2 4 1" /><circle cx="8" cy="8" r="7.500" strokeDasharray="1.500 2" /></svg></div>
      <div className={cell}><span className="flex size-[16px] items-center justify-center rounded-[5px] bg-[#4a8cff]"><svg width="10" height="7" fill="#fff"><path d="M0 1h6.500v5.500H0zM7 3l3-2v5.500L7 4.500z" /></svg></span></div>
      <div className="ml-px flex h-full w-[36px] items-center justify-center border-b-2 border-[#8de8dc] bg-[#343434]"><span className="flex size-[16px] items-center justify-center border border-[#4fbf9c] bg-[#15322b]"><ConnectMark size={11} /></span></div>
      <div className="ml-auto flex h-full items-center">
        <svg width="15" height="16" fill="none" stroke="#ddd"><circle cx="10" cy="4" r="2.500" /><circle cx="5" cy="8" r="2.500" /><path d="M.500 15q0-4.500 4.500-4.500t4 4.500M10 6.500q4 0 4 4" /></svg>
        <svg className="ml-[16px]" width="13" height="8" fill="none" stroke="#eee" strokeWidth="1.200"><path d="M1 7l5.500-5.500L12 7" /></svg>
        <svg className="ml-[11px]" width="12" height="16" fill="#fff"><rect x="3" width="6" height="11" rx="1" /><path d="M1 8v4h10V8M6 12v3M3 15.500h6" fill="none" stroke="#fff" /></svg>
        <svg className="ml-[12px]" width="15" height="10" fill="none" stroke="#eee"><path d="M.500.500h12v8H.500zM13 3h1.500v3.500H13" /><path d="M2.500 2.500h4v4h-4z" fill="#eee" /></svg>
        <svg className="ml-[8px]" width="16" height="11"><path d="M3 11a3 3 0 0 1 0-6 5 5 0 0 1 9-1 3.500 3.500 0 0 1 1 7z" fill="#aaa" /><path d="M4 11q-3-2 1-4l4-1 6 3q0 2-2 2z" fill="#f2f2f2" /></svg>
        <svg className="ml-[8px]" width="16" height="11"><path d="M3 11a3 3 0 0 1 0-6 5 5 0 0 1 9-1 3.500 3.500 0 0 1 1 7z" fill="#0a62b8" /><path d="M4 11q-3-2 1-4l4-1 6 3q0 2-2 2z" fill="#1c95e8" /></svg>
        <svg className="ml-[8px]" width="16" height="14" fill="none" stroke="#eee"><path d="M4.500 2.500h11v7h-8M9 10v3M5.500 13h7M.500.500h4v4h-4zM2.500 4.500V12h3" /></svg>
        <svg className="ml-[8px]" width="16" height="14" fill="none" stroke="#eee"><path d="M.500 4.500h2L6 1.500v10L2.500 8.500h-2zM8 4.500q1.500 2 0 4" /><path d="M10 3q3 3.500 0 7M12.500 1q4 5 0 11" stroke="#888" /></svg>
        <span className="ml-[11px] font-['Open_Sans',sans-serif] text-[12px] tracking-[-0.7px]">12:09</span>
        <svg className="ml-[18px] mr-[20px]" width="16" height="16" fill="#fff"><path d="M0 0h16v13h-5l-3 3-3-3H0z" /><path d="M3 3.500h10M3 6.500h10M3 9.500h6" stroke="#111" /></svg>
        <span className="mr-[4px] h-full w-px bg-[#555]" />
      </div>
    </div>
  );
}

export default function App() {
  return (
    <div className="flex h-[768px] w-[1366px] flex-col overflow-hidden bg-[#404040] font-['Noto_Sans',sans-serif]">
      <TopBars />
      <div className="flex h-[681px] shrink-0 pb-[4px] pl-[4px] pt-[4px]">
        <SharePod />
        <RightColumn />
      </div>
      <Taskbar />
    </div>
  );
}
